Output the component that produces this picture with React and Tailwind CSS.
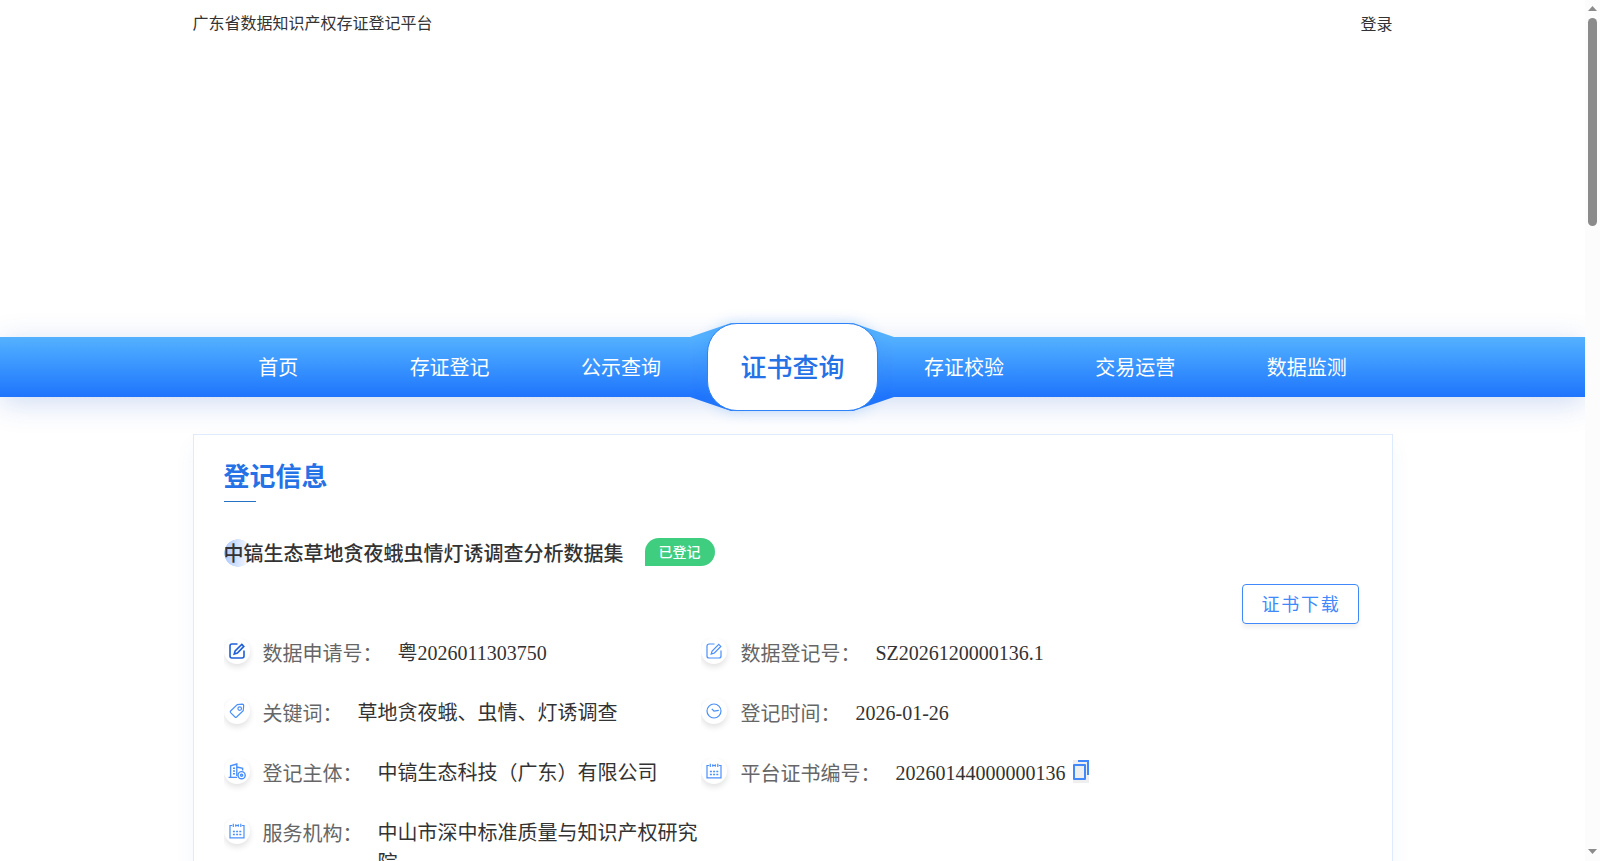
import React from 'react';

const navItems = ['首页', '存证登记', '公示查询', '证书查询', '存证校验', '交易运营', '数据监测'];
const activeItem = '证书查询';

const rows = [
  [
    { icon: 'edit', dark: true, label: '数据申请号', value: '粤2026011303750' },
    { icon: 'edit', label: '数据登记号', value: 'SZ2026120000136.1' },
  ],
  [
    { icon: 'tag', label: '关键词', value: '草地贪夜蛾、虫情、灯诱调查' },
    { icon: 'clock', label: '登记时间', value: '2026-01-26' },
  ],
  [
    { icon: 'building', label: '登记主体', value: '中镐生态科技（广东）有限公司' },
    { icon: 'calendar', label: '平台证书编号', value: '20260144000000136', copy: true },
  ],
  [{ icon: 'calendar', label: '服务机构', value: '中山市深中标准质量与知识产权研究院' }],
];

const Glyph = ({ name }) => {
  switch (name) {
    case 'edit':
      return (
        <>
          <path d="M8.5 1H3a2 2 0 0 0-2 2v10a2 2 0 0 0 2 2h10a2 2 0 0 0 2-2V7.5" />
          <path d="M12.8 1.4l2 2L8.4 10l-3.2 1 .9-3z" />
        </>
      );
    case 'tag':
      return (
        <>
          <path d="M8.3 1.6l5-.5q1.4 0 1.4 1.4l-.5 5.2L7.6 14q-.8.7-1.6 0L1.6 9.6q-.7-.8 0-1.6z" />
          <circle cx="10.7" cy="5.6" r="1.8" />
        </>
      );
    case 'clock':
      return (
        <>
          <circle cx="8" cy="8" r="7" />
          <path d="M5.8 5.8L8 8.2l4.8-.9" />
        </>
      );
    case 'building':
      return (
        <>
          <path d="M-.4 14.4H8M1.6 14.4V2.8L7.8 1v12M7.8 4l5.8 1.4V7.5M4 5.2h2M4 8h2M4 10.8h2" />
          <circle cx="12.6" cy="12.2" r="3.6" />
          <circle cx="12.6" cy="12.2" r="1.1" />
        </>
      );
    default:
      return (
        <>
          <path d="M3.2 2.5H1v12.4h14V2.5h-2.2M6.2 2.5h3.6" />
          <path d="M4.3.7v3.4M6.8 1.2v2.6M9.3 1.2v2.6M11.8.7v3.4" />
          <path d="M3.9 8.4h2M7.1 8.4h2M10.3 8.4h2M3.9 11.6h2M7.1 11.6h2M10.3 11.6h2" strokeWidth="1.5" />
        </>
      );
  }
};

const RowIcon = ({ name, dark }) => (
  <span className="h-[35px] w-[30px] shrink-0 overflow-hidden">
    <span className="flex h-[26px] w-[26px] items-start justify-center rounded-full bg-white pt-[5px] shadow-[0_3px_6px_rgba(0,0,0,0.12)]">
      <svg
        viewBox="0 0 16 16"
        className={dark ? 'ml-px h-4 w-4 overflow-visible text-[#1f60d8]' : 'ml-px h-4 w-4 overflow-visible text-[#4a8ffb]'}
        fill="none"
        stroke="currentColor"
        strokeWidth={dark ? 1.6 : name === 'building' ? 1.4 : 1.2}
      >
        <Glyph name={name} />
      </svg>
    </span>
  </span>
);

const CopyIcon = () => (
  <svg viewBox="0 0 16 23" className="ml-[7px] mt-[2px] h-[23px] w-4 shrink-0 bg-[#efefef]" fill="none" stroke="#4189fb">
    <path d="M1 5h11v14H1z" strokeWidth="2" strokeLinejoin="round" />
    <path d="M5 1h10v14" strokeWidth="2" />
  </svg>
);

const InfoItem = ({ item, right }) => (
  <div className={right ? '-ml-px flex items-start' : 'flex w-[478px] items-start'}>
    <RowIcon name={item.icon} dark={item.dark} />
    <span className={right ? 'ml-[10px] mt-px shrink-0 text-[#666]' : 'ml-[9px] mt-px shrink-0 text-[#666]'}>
      {item.label}：
    </span>
    <span className="ml-[15px] max-w-[330px]">{item.value}</span>
    {item.copy && <CopyIcon />}
  </div>
);

const ActiveTab = ({ children }) => (
  <div className="relative flex flex-1 justify-center">
    <svg viewBox="0 0 206 88" className="absolute -top-[14px] h-[88px] w-[206px] max-w-none">
      <defs>
        <linearGradient id="wing" gradientUnits="userSpaceOnUse" x1="0" y1="14" x2="0" y2="74">
          <stop offset="0" stopColor="#54b1ff" />
          <stop offset="1" stopColor="#1f74fc" />
        </linearGradient>
      </defs>
      <path d="M1 14L42 0H164L205 14V74L164 88H42L1 74z" fill="url(#wing)" />
    </svg>
    <div className="absolute -top-[14px] flex h-[88px] w-[171.4px] items-center justify-center rounded-[30px] border border-[#2f82f7] bg-white pt-[3px] text-[26px] font-medium text-[#2571e6] shadow-[0_0_14px_rgba(50,140,240,0.3)]">
      {children}
    </div>
  </div>
);

const Scrollbar = () => (
  <div className="flex h-full w-[15px] shrink-0 flex-col items-center bg-[#fcfcfc] pt-[6px] pr-px pb-[7px]">
    <svg viewBox="0 0 9 5" className="h-[5px] w-[9px]" fill="#8b8b8b"><path d="M0 5L4.5 0L9 5z" /></svg>
    <div className="mt-[7px] h-[208px] w-[9px] rounded-full bg-[#8b8b8b]" />
    <svg viewBox="0 0 9 5" className="mt-auto h-[5px] w-[9px]" fill="#8b8b8b"><path d="M0 0L4.5 5L9 0z" /></svg>
  </div>
);

export default function App() {
  return (
    <div className="flex h-[861px] w-[1600px] overflow-hidden bg-white font-['Liberation_Serif','Noto_Sans_CJK_SC',serif] text-[#333]">
      <div className="h-full w-[1585px] overflow-hidden">
        <header className="mx-auto flex h-[337px] w-[1200px] justify-between pt-3 text-base leading-6">
          <span>广东省数据知识产权存证登记平台</span>
          <span className="pt-px">登录</span>
        </header>

        <nav className="h-[60px] bg-linear-to-b from-[#54b1ff] to-[#1f74fc] shadow-[0_6px_30px_rgba(30,90,200,0.22)]">
          <div className="mx-auto flex h-full w-[1200px] text-xl leading-[62px] text-white">
            {navItems.map((item) =>
              item === activeItem ? (
                <ActiveTab key={item}>{item}</ActiveTab>
              ) : (
                <a key={item} className="flex-1 text-center">{item}</a>
              )
            )}
          </div>
        </nav>

        <main className="mx-auto mt-[37px] h-[600px] w-[1200px] border border-[#deebff] bg-white px-[30px] pt-6 shadow-[0_10px_20px_rgba(38,100,220,0.05)]">
          <h2 className="text-[26px] leading-[38px] font-bold text-[#2571e6]">登记信息</h2>
          <div className="mt-1 h-px w-8 bg-[#2571c6]" />

          <div className="mt-9 flex h-7">
            <h3 className="mt-px h-7 bg-[radial-gradient(circle_at_14px_14px,transparent_13.5px,white_14px),linear-gradient(to_right,#acc9fc,white_28px)] text-xl leading-[30px] font-medium">
              中镐生态草地贪夜蛾虫情灯诱调查分析数据集
            </h3>
            <span className="ml-[21px] h-7 w-[70px] rounded-[14px] rounded-bl-none bg-[#3fcd7f] text-center text-sm leading-[30px] font-medium text-white">
              已登记
            </span>
          </div>

          <div className="mt-[18px] flex justify-end pr-[3px]">
            <button className="h-10 w-[117px] rounded border border-[#4189fb] bg-white pt-[3px] pl-[2px] text-[18px] tracking-[1.8px] text-[#4189fb] shadow-[0_4px_4px_rgba(0,0,0,0.06)]">
              证书下载
            </button>
          </div>

          <div className="mt-[14px] text-xl leading-[30px]">
            {rows.map((row) => (
              <div key={row[0].label} className="flex h-[60px]">
                {row.map((item, i) => (
                  <InfoItem key={item.label} item={item} right={i === 1} />
                ))}
              </div>
            ))}
          </div>
        </main>
      </div>
      <Scrollbar />
    </div>
  );
}
